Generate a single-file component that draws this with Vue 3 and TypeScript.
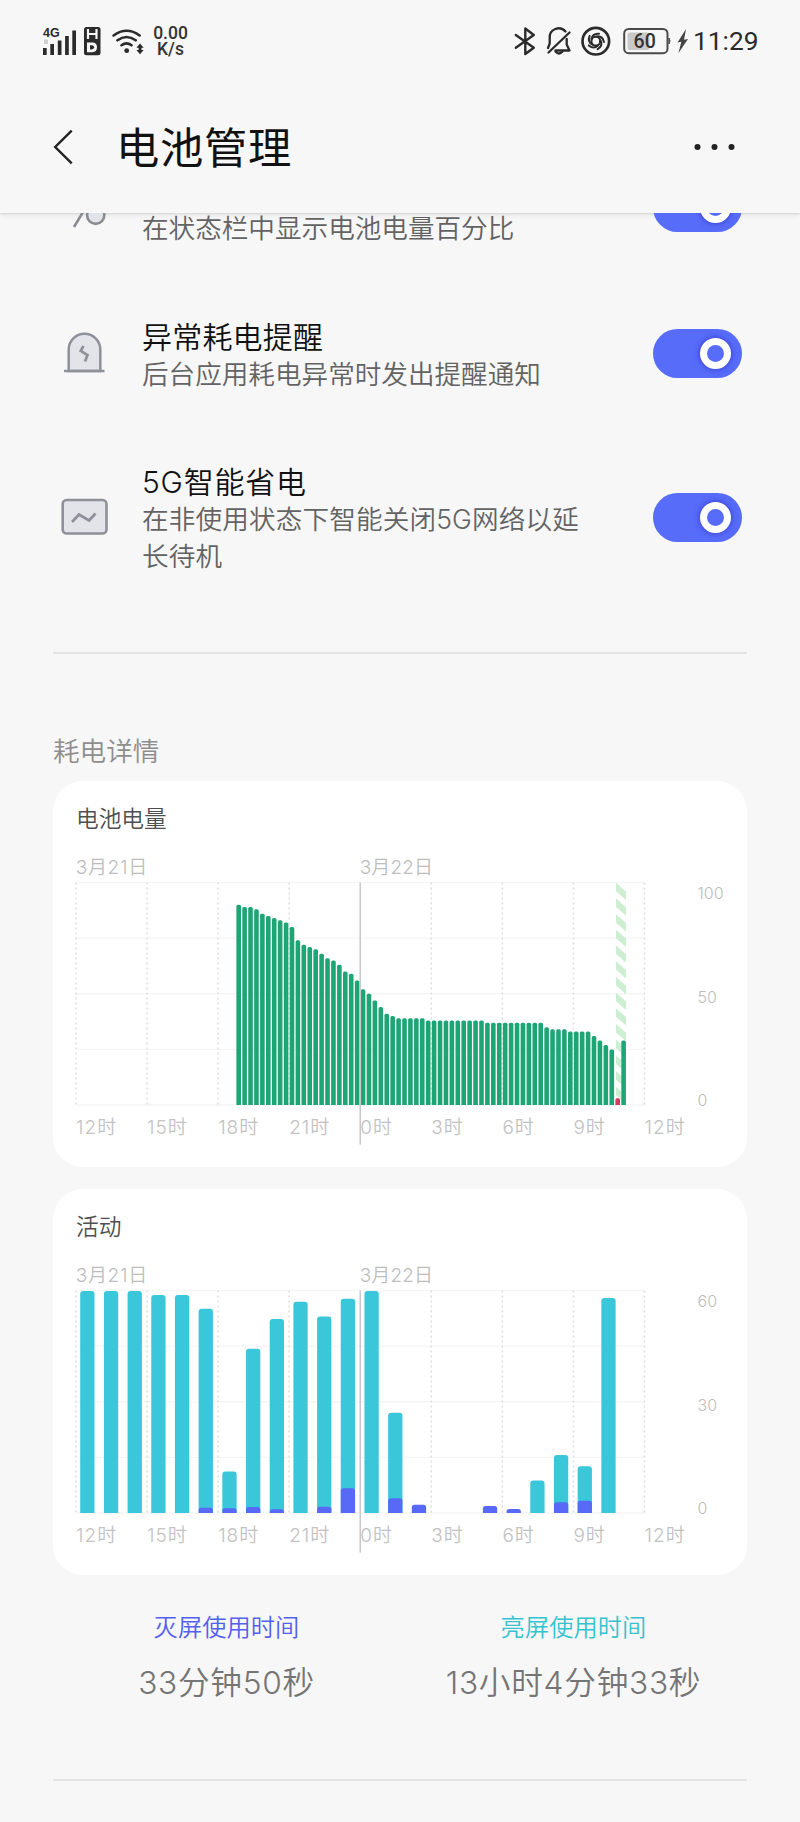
<script setup lang="ts">
interface Tick { x: number; label: string }
interface ActivityBar { x: number; on: number; off: number }

const plotWidth = 568.5
const plotHeight = 222.5
const top = 101.5
const left = 23
const base = top + plotHeight
const hour = plotWidth / 24
const quarter = hour / 4

const repeat = (value: number, count: number): number[] => Array<number>(count).fill(value)

const levels: number[] = [
  90, 89, 89, 88, 86, 85, 84, 83, 82, 80, 74, 72, 71, 70, 68, 66, 65, 63, 60, 59, 56,
  52, 50, 47, 44, 41, 40, ...repeat(39, 5), ...repeat(38, 10), ...repeat(37, 10),
  35, ...repeat(34, 3), ...repeat(33, 4), 31, 29, 27, 25, 3, 29,
]
const firstSlot = 27
const lowLevel = 10

const screenOn: number[] = [
  60, 60, 60, 58.9, 58.9, 55.2, 11.2, 44.4, 52.4, 57.1, 53.1, 57.9,
  60, 27.1, 0, 0, 0, 0, 0, 8.8, 15.7, 12.6, 58.1, 0,
]
const screenOff: number[] = [
  0, 0, 0, 0, 0, 1.4, 1.3, 1.6, 1, 0, 1.7, 6.7,
  0, 4, 2.2, 0, 0, 1.9, 1.1, 0, 2.9, 3.3, 0, 0,
]

const barTop = (x: number, y: number, w: number, r: number): string =>
  `M${x} ${base}V${y + r}q0 ${-r} ${r} ${-r}h${w - 2 * r}q${r} 0 ${r} ${r}V${base}z`

const levelBars = levels.map((value, i) => {
  const x = left + 0.5 + (firstSlot + i) * quarter
  return { d: barTop(x, base - (value / 100) * plotHeight, 4.6, 1.6), low: value < lowLevel }
})

const activity: ActivityBar[] = screenOn.map((on, i) => ({
  x: left + 4.2 + i * hour,
  on: (on / 60) * (plotHeight - 0.4),
  off: (screenOff[i] / 60) * (plotHeight - 0.4),
}))

const ticks: Tick[] = ['12时', '15时', '18时', '21时', '0时', '3时', '6时', '9时', '12时'].map(
  (label, i) => ({ x: left + i * 3 * hour, label }),
)
const rows = [0, 1, 2, 3, 4].map((i) => top + (i * plotHeight) / 4)
const stripes = Array.from({ length: 15 }, (_, i) => top + i * 15.7)

const charts = [
  { id: 'level', title: '电池电量', scale: ['100', '50', '0'] },
  { id: 'activity', title: '活动', scale: ['60', '30', '0'] },
]
</script>

<template>
  <div class="screen">
    <header class="top">
      <div class="status">
        <div class="group">
          <svg class="signal" width="36" height="32" viewBox="42 24 36 32">
            <text x="43" y="36" class="net">4G</text>
            <path d="M44 38.500h4v4.500h-4z" fill="#d0d0d0" />
            <path d="M43 47h3.700v7H43zM50.300 43H54v11h-3.700zM57.800 39.500h3.700V54h-3.700zM65.100 35h3.700v19h-3.700zM72.300 29.500H76V54h-3.700z" fill="#2b2b2b" />
          </svg>
          <svg class="hd" width="18" height="30" viewBox="83 25 18 30">
            <rect x="84" y="26" width="16.500" height="28.300" rx="2.500" fill="#2b2b2b" />
            <path d="M88 28v10M96.500 28v10M88 33h8.500" stroke="#f7f7f7" stroke-width="2.200" fill="none" />
            <path d="M87 41.500h5.300q4.700 0 4.700 4.800t-4.700 4.900H87z" fill="#f7f7f7" />
            <path d="M90 44.300h1.700q2.400 0 2.400 2t-2.400 2.100h-1.700z" fill="#2b2b2b" />
          </svg>
          <svg class="wifi" width="34" height="30" viewBox="111 25 34 30">
            <g fill="none" stroke="#2b2b2b" stroke-width="2.600" stroke-linecap="round">
              <path d="M113.600 34.500q13-9.500 26 0M117.500 39.300q9-6.600 18.200 0M121.500 44.200q5-3.600 10 0" />
            </g>
            <circle cx="126.700" cy="49.700" r="2.400" fill="#2b2b2b" />
            <path d="M140 42.500l3.700 4.300h-2.200v2.200h2.200L140 53.300 136.400 49h2.200v-2.200h-2.200z" fill="#2b2b2b" />
          </svg>
          <div class="speed"><span>0.00</span><span>K/s</span></div>
        </div>
        <div class="group">
          <svg class="bt" width="22" height="32" viewBox="514 24 22 32">
            <path d="M515.800 34l18 12.700-8.500 6.300V27.500l8.500 6.500-18 12.700" fill="none" stroke="#2b2b2b" stroke-width="2.400" stroke-linejoin="round" stroke-linecap="round" />
          </svg>
          <svg class="bell" width="26" height="32" viewBox="546 24 26 32">
            <g fill="none" stroke="#2b2b2b" stroke-width="2.300" stroke-linecap="round" stroke-linejoin="round">
              <path d="M565.500 30.500a9 9 0 0 0-15.800 6.500v5.500l-1.700 4.500M555.500 49.500h14l-2.800-6V38M569.500 31.500L548.500 51.500" />
              <path d="M555.500 50.500q3.500 4 7 0" />
            </g>
          </svg>
          <svg class="swirl" width="32" height="32" viewBox="580 24 32 32">
            <circle cx="595.800" cy="40.200" r="13.300" fill="none" stroke="#2b2b2b" stroke-width="2.700" />
            <circle cx="595.800" cy="40.200" r="4.400" fill="none" stroke="#2b2b2b" stroke-width="2.100" />
            <g fill="none" stroke="#2b2b2b" stroke-width="2" stroke-linecap="round">
              <path v-for="a in [0, 72, 144, 216, 288]" :key="a" d="M591.500 38q1-5.800 7.500-5.300" :transform="`rotate(${a} 595.800 40.200)`" />
            </g>
          </svg>
          <svg class="battery" width="48" height="28" viewBox="623 26 48 28">
            <rect x="624.200" y="28" width="43.300" height="24.200" rx="4.500" fill="none" stroke="#4a4a4a" stroke-width="2" />
            <path d="M669 37q2 3 0 6z" fill="#4a4a4a" stroke="#4a4a4a" />
            <rect x="627.500" y="31.500" width="22" height="17.500" rx="2" fill="#c9c9c9" />
            <text x="644.700" y="46.900" text-anchor="middle" class="pct">60</text>
          </svg>
          <svg class="bolt" width="12" height="28" viewBox="677 26 12 28">
            <path d="M686 28l-8.500 13.500 3.800-.8L678.500 52 688 38l-4 .8z" fill="#444" />
          </svg>
          <span class="clock">11:29</span>
        </div>
      </div>
      <div class="bar">
        <svg class="back" width="24" height="38" viewBox="52 128 24 38">
          <path d="M71.700 130.700L55.200 147l16.500 16.300" fill="none" stroke="#222" stroke-width="2.400" />
        </svg>
        <h1>电池管理</h1>
        <svg class="more" width="44" height="8" viewBox="0 0 44 8">
          <circle cx="4.500" cy="4" r="3" /><circle cx="21.500" cy="4" r="3" /><circle cx="38.500" cy="4" r="3" />
        </svg>
      </div>
    </header>

    <main class="content">
      <section class="settings">
        <div class="row">
          <svg class="icon" width="50" height="50" viewBox="59 183 50 50">
            <path d="M92 197L74 227" fill="none" stroke="#8b8c93" stroke-width="2.600" />
            <circle cx="95.700" cy="215.300" r="8.600" fill="#e3e4ea" stroke="#8b8c93" stroke-width="2.600" />
          </svg>
          <div class="copy scrolled"><p>在状态栏中显示电池电量百分比</p></div>
          <span class="toggle"><i></i></span>
        </div>
        <div class="row">
          <svg class="icon" width="50" height="50" viewBox="59 328 50 50">
            <path d="M68.700 371V349.500a15.800 15.800 0 0 1 31.600 0V371z" fill="#e3e4ea" stroke="#8f9099" stroke-width="2.500" />
            <path d="M64 371h40.500" stroke="#8f9099" stroke-width="2.600" />
            <path d="M83.500 346l-2.800 4.800 6.800 4.300-2.500 6.500" fill="none" stroke="#8f9099" stroke-width="2.700" />
          </svg>
          <div class="copy"><h2>异常耗电提醒</h2><p>后台应用耗电异常时发出提醒通知</p></div>
          <span class="toggle"><i></i></span>
        </div>
        <div class="row">
          <svg class="icon" width="50" height="50" viewBox="59 492 50 50">
            <rect x="62.700" y="500" width="43.800" height="33.500" rx="4" fill="#e3e4ea" stroke="#8f9099" stroke-width="2.600" />
            <path d="M72 522l7-7.500 10 6 6.500-7" fill="none" stroke="#8f9099" stroke-width="2.700" />
          </svg>
          <div class="copy"><h2 class="latin">5G智能省电</h2><p class="wide">在非使用状态下智能关闭5G网络以延长待机</p></div>
          <span class="toggle"><i></i></span>
        </div>
      </section>

      <hr class="rule">
      <h3>耗电详情</h3>

      <section class="cards">
        <article v-for="chart in charts" :key="chart.id" class="card">
          <svg width="694" height="386" viewBox="0 0 694 386">
            <defs>
              <clipPath :id="`charge-${chart.id}`">
                <path :d="`M${left + 539.800} ${top}h10.200v158h-5v60h-5.200z`" />
              </clipPath>
            </defs>
            <text :x="left" y="46" class="title">{{ chart.title }}</text>
            <text :x="left - 0.300" y="93" class="date">3月21日</text>
            <text :x="left - 0.500 + 12 * hour" y="93" class="date second">3月22日</text>
            <line v-for="y in rows" :key="y" :x1="left" :x2="left + plotWidth" :y1="y" :y2="y" class="h-line" />
            <template v-for="(tick, i) in ticks" :key="i">
              <line v-if="i !== 4" :x1="tick.x" :x2="tick.x" :y1="top" :y2="base" class="v-line" />
              <text :x="tick.x" :y="base + 28.700" class="tick">{{ tick.label }}</text>
            </template>

            <template v-if="chart.id === 'level'">
              <g :clip-path="`url(#charge-${chart.id})`">
                <path v-for="y in stripes" :key="y" :d="`M${left + 539.800} ${y}l10.200 9v8.500l-10.200 -9z`" fill="#cdeed1" />
              </g>
              <path v-for="(bar, i) in levelBars" :key="i" :d="bar.d" :fill="bar.low ? '#d63a62' : '#1ea575'" />
            </template>
            <template v-else>
              <template v-for="(bar, i) in activity" :key="i">
                <path v-if="bar.on" :d="barTop(bar.x, base - bar.on, 14.3, 3)" fill="#3bc7da" />
                <path v-if="bar.off" :d="barTop(bar.x, base - bar.off, 14.3, 2.6)" fill="#5869f8" />
              </template>
            </template>

            <line :x1="left + 12 * hour" :x2="left + 12 * hour" :y1="top" :y2="base + 39.500" class="day-line" />
            <text v-for="(label, i) in chart.scale" :key="label" x="644.500" :y="118 + i * 103.600" class="scale">{{ label }}</text>
          </svg>
        </article>
      </section>

      <section class="stats">
        <div class="stat"><span class="name off">灭屏使用时间</span><span class="value">33分钟50秒</span></div>
        <div class="stat"><span class="name on">亮屏使用时间</span><span class="value">13小时4分钟33秒</span></div>
      </section>
      <hr class="rule">
    </main>
  </div>
</template>

<style>
body { background: #f7f7f7; }
</style>

<style scoped>
.screen {
  width: 800px;
  height: 1822px;
  overflow: hidden;
  background: #f7f7f7;
  font-family: Inter, "Noto Sans CJK SC", sans-serif;
  font-weight: 350;
}
h1, h2, h3, p { margin: 0; font-weight: 350; }
svg { display: block; flex: none; }
.top { height: 213px; box-shadow: 0 1px 2px #d4d4d4, 0 3px 6px #ececec; }
.status { height: 82px; display: flex; justify-content: space-between; align-items: center; padding: 0 41px 0 42px; box-sizing: border-box; }
.group { display: flex; align-items: center; }
.net { font: 700 12.500px/14px "Liberation Sans", sans-serif; fill: #2b2b2b; }
.signal { overflow: visible; }
.hd { margin-left: 5px; }
.wifi { margin-left: 10px; }
.speed {
  display: flex; flex-direction: column; align-items: center; margin-left: 7px; width: 37px;
  font: 500 17.500px/16.500px Roboto, sans-serif; color: #333;
}
.bell { margin-left: 10px; }
.swirl { margin-left: 8px; }
.battery { margin-left: 11px; }
.pct { font: 500 19.500px Roboto, sans-serif; fill: #333; }
.bolt { margin-left: 6px; }
.clock { margin-left: 4px; width: 66px; font: 400 26.300px/30px Roboto, sans-serif; color: #2b2b2b; white-space: nowrap; }
.bar { height: 129px; display: flex; align-items: center; padding: 0 63px 0 52px; }
h1 { flex: 1; margin-left: 40px; padding-top: 3px; font-size: 43.300px; line-height: 60px; letter-spacing: 0.700px; color: #111; font-weight: 400; }
.more { fill: #222; }
.content { height: 1609px; overflow: hidden; display: flex; flex-direction: column; }
.settings { margin-top: -78px; flex: none; }
.row { display: flex; align-items: center; padding: 35.750px 58.500px 35.750px 59px; }
.copy { flex: 1; margin: 2.300px 0 -2.300px 33px; padding-right: 60px; }
.scrolled { padding-top: 37px; }
h2 { font-size: 30px; line-height: 37px; letter-spacing: 0.200px; color: #111; }
.latin { letter-spacing: 0.800px; }
p { font-size: 26.600px; line-height: 37px; color: #636363; }
.wide { letter-spacing: 0.150px; }
.toggle {
  flex: none; width: 88.500px; height: 49px; border-radius: 25px; background: #586cfa;
  display: flex; align-items: center; justify-content: flex-end; padding-right: 11px; box-sizing: border-box;
}
.toggle i {
  width: 31px; height: 31px; box-sizing: border-box; border: 7.500px solid #fff; border-radius: 50%;
  background: #586cfa; box-shadow: 0 0 6px #3238c8;
}
.rule { flex: none; width: 694px; height: 2px; margin: 43px 53px 0; border: 0; background: #e3e3e3; }
h3 { margin: 77px 0 0 53px; font-size: 26.600px; line-height: 40px; color: #8e8e8e; }
.cards { display: flex; flex-direction: column; gap: 22.500px; padding: 10px 53px 0; }
.card { height: 386px; border-radius: 30px; background: #fff; }
.title { font-size: 22.700px; fill: #4f4f4f; }
.date { font-size: 19px; letter-spacing: 0.700px; fill: #bdbdbd; }
.second { letter-spacing: 0.100px; }
.tick { font-size: 19px; letter-spacing: 1px; fill: #c2c2c2; }
.scale { font-size: 16px; fill: #bdbdbd; }
.h-line { stroke: #f5f5f5; stroke-width: 1.300; }
.v-line { stroke: #dedede; stroke-width: 1.500; stroke-dasharray: 2 3; }
.day-line { stroke: #c9c9c9; stroke-width: 1.600; }
.stats { display: grid; grid-template-columns: 1fr 1fr; padding: 32px 53px 0; }
.stat { display: flex; flex-direction: column; align-items: center; }
.name { font-size: 24.300px; line-height: 40px; }
.name.off { color: #5560ee; }
.name.on { color: #35c3d0; }
.value { margin-top: 14px; font-size: 31.700px; line-height: 44px; letter-spacing: 0.700px; color: #757575; }
.stats + .rule { margin-top: 74px; }
</style>
